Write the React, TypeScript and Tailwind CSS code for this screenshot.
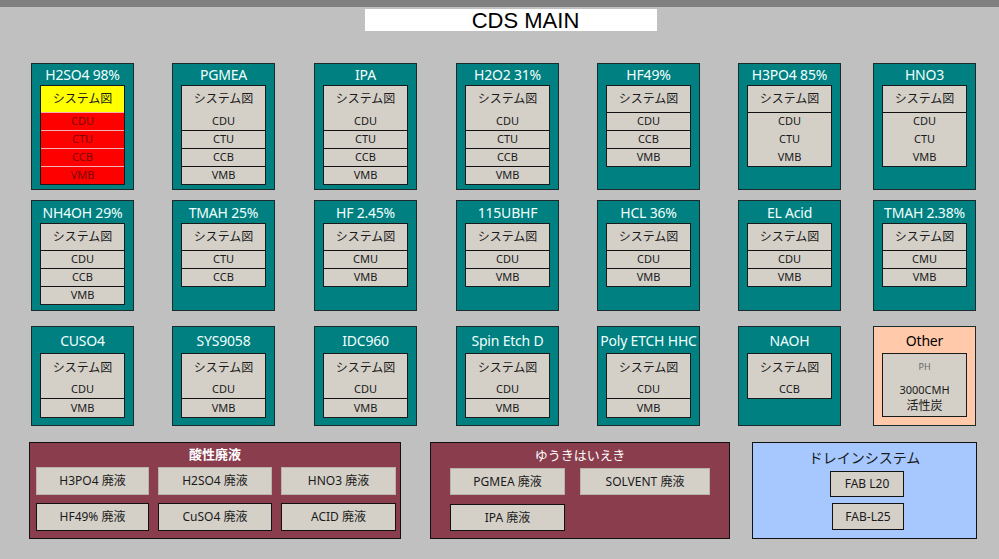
import React from 'react';

type Seg = { t: string[]; h: string; line?: boolean; tone?: 'y' | 'r' };
type CardDef = { title: string; segs: Seg[]; other?: boolean };

const sys = (h = 'h-[26px]', tone?: 'y'): Seg => ({ t: ['システム図'], h, tone });
const row = (label: string, line = true, tone?: 'r'): Seg => ({ t: [label], h: 'h-[18px]', line, tone });

const full = (labels: string[]): Seg[] => [sys(), ...labels.map((l) => row(l))];
// system box where the first item shares its cell (no divider)
const open = (labels: string[]): Seg[] => [sys(), ...labels.map((l, i) => row(l, i > 0))];
const merged = (first: string, rest: string[]): Seg[] => [
  { t: ['システム図', first], h: 'h-[44px]' },
  ...rest.map((l) => ({ t: [l], h: 'h-[19px]', line: true })),
];

const ROW1: CardDef[] = [
  {
    title: 'H2SO4 98%',
    segs: [sys('h-[26px]', 'y'), row('CDU', true, 'r'), row('CTU', true, 'r'), row('CCB', true, 'r'), row('VMB', true, 'r')],
  },
  { title: 'PGMEA', segs: open(['CDU', 'CTU', 'CCB', 'VMB']) },
  { title: 'IPA', segs: open(['CDU', 'CTU', 'CCB', 'VMB']) },
  { title: 'H2O2 31%', segs: open(['CDU', 'CTU', 'CCB', 'VMB']) },
  { title: 'HF49%', segs: full(['CDU', 'CCB', 'VMB']) },
  { title: 'H3PO4 85%', segs: [sys(), row('CDU'), row('CTU', false), row('VMB', false)] },
  { title: 'HNO3', segs: [sys(), row('CDU'), row('CTU', false), row('VMB', false)] },
];

const ROW2: CardDef[] = [
  { title: 'NH4OH 29%', segs: full(['CDU', 'CCB', 'VMB']) },
  { title: 'TMAH 25%', segs: full(['CTU', 'CCB']) },
  { title: 'HF 2.45%', segs: full(['CMU', 'VMB']) },
  { title: '115UBHF', segs: full(['CDU', 'VMB']) },
  { title: 'HCL 36%', segs: full(['CDU', 'VMB']) },
  { title: 'EL Acid', segs: full(['CDU', 'VMB']) },
  { title: 'TMAH 2.38%', segs: full(['CMU', 'VMB']) },
];

const ROW3: CardDef[] = [
  { title: 'CUSO4', segs: merged('CDU', ['VMB']) },
  { title: 'SYS9058', segs: merged('CDU', ['VMB']) },
  { title: 'IDC960', segs: merged('CDU', ['VMB']) },
  { title: 'Spin Etch D', segs: merged('CDU', ['VMB']) },
  { title: 'Poly ETCH HHC', segs: merged('CDU', ['VMB']) },
  { title: 'NAOH', segs: merged('CCB', []) },
  { title: 'Other', other: true, segs: [{ t: ['PH', '3000CMH', '活性炭'], h: 'h-[62px]' }] },
];

function SegCell({ s }: { s: Seg }) {
  const bg = s.tone === 'y' ? 'bg-[#ffff00]' : s.tone === 'r' ? 'bg-[#ff0000]' : '';
  const color = s.tone === 'r' ? 'text-[#7a0a0a]' : 'text-[#1a1a1a]';
  const line = s.line ? (s.tone === 'r' ? 'border-t border-[#f3b0b0]' : 'border-t border-[#111]') : '';

  if (s.t.length === 3) {
    return (
      <div className={`${s.h} flex flex-col items-center text-[11px] leading-[16px] ${color}`}>
        <span className="mt-[5px] text-[9px] text-[#666]">PH</span>
        <span className="mt-[7px]">3000CMH</span>
        <span className="text-[12px]">活性炭</span>
      </div>
    );
  }
  if (s.t.length === 2) {
    return (
      <div className={`${s.h} flex flex-col items-center ${color}`}>
        <span className="h-[28px] flex items-center text-[12px]">{s.t[0]}</span>
        <span className="h-[14px] flex items-center text-[11px]">{s.t[1]}</span>
      </div>
    );
  }
  const isSys = s.t[0] === 'システム図';
  return (
    <div className={`${s.h} ${bg} ${line} flex items-center justify-center ${isSys ? 'text-[12px]' : 'text-[11px]'} ${color}`}>
      {s.t[0]}
    </div>
  );
}

function Card({ c, head }: { c: CardDef; head: string }) {
  return (
    <div className={`w-[103px] h-full border border-[#1b2a2a] ${c.other ? 'bg-[#ffc9aa]' : 'bg-[#008080]'}`}>
      <div
        className={`${head} flex items-center justify-center whitespace-nowrap text-[14px] tracking-[-0.2px] ${
          c.other ? 'text-black' : 'text-[#f2ffff]'
        }`}
      >
        {c.title}
      </div>
      <div className="mx-auto w-[85px] border border-[#1a1a1a] bg-[#d4d0c8]">
        {c.segs.map((s, i) => (
          <SegCell key={i} s={s} />
        ))}
      </div>
    </div>
  );
}

function CardRow({ cards, head, cls }: { cards: CardDef[]; head: string; cls: string }) {
  return (
    <div className={`ml-[31px] grid grid-cols-[141px_142px_142px_141px_141px_135px_103px] ${cls}`}>
      {cards.map((c) => (
        <Card key={c.title} c={c} head={head} />
      ))}
    </div>
  );
}

function Btn({ label, cls, strong = true }: { label: string; cls: string; strong?: boolean }) {
  return (
    <div
      className={`${cls} flex items-center justify-center bg-[#d4d0c8] text-[12px] text-[#1a1a1a] whitespace-nowrap border ${
        strong ? 'border-[#111]' : 'border-[#b8b4ac]'
      }`}
    >
      {label}
    </div>
  );
}

export default function App() {
  return (
    <div
      className="w-[999px] h-[559px] overflow-hidden bg-[#c0c0c0]"
      style={{ fontFamily: '"Noto Sans", "Noto Sans CJK JP", sans-serif' }}
    >
      <div className="h-[7px] bg-[#808080]" />
      <div
        className="ml-[365px] mt-[2px] w-[292px] h-[22px] pl-[29px] bg-white flex items-center justify-center text-[22px] text-black whitespace-pre"
        style={{ fontFamily: '"Liberation Sans", sans-serif' }}
      >
        CDS MAIN
      </div>

      <CardRow cards={ROW1} head="h-[21px]" cls="mt-[32px] h-[127px]" />
      <CardRow cards={ROW2} head="h-[22px]" cls="mt-[10px] h-[111px]" />
      <CardRow cards={ROW3} head="h-[26px]" cls="mt-[15px] h-[100px]" />

      <div className="mt-[16px] flex">
        {/* 酸性廃液 */}
        <div className="ml-[29px] w-[372px] h-[97px] border border-[#111] bg-[#8a3d4d]">
          <div className="h-[24px] flex items-center justify-center text-[13px] font-bold text-white">酸性廃液</div>
          <div className="ml-[6px] grid grid-cols-[113px_114px_115px] gap-x-[9px] gap-y-[8px]">
            <Btn label="H3PO4 廃液" cls="h-[28px]" strong={false} />
            <Btn label="H2SO4 廃液" cls="h-[28px]" strong={false} />
            <Btn label="HNO3 廃液" cls="h-[28px]" strong={false} />
            <Btn label="HF49% 廃液" cls="h-[28px]" />
            <Btn label="CuSO4 廃液" cls="h-[28px]" />
            <Btn label="ACID 廃液" cls="h-[28px]" />
          </div>
        </div>

        {/* ゆうきはいえき */}
        <div className="ml-[29px] w-[300px] h-[97px] border border-[#111] bg-[#8a3d4d]">
          <div className="h-[25px] flex items-center justify-center text-[13px] text-white">ゆうきはいえき</div>
          <div className="ml-[19px] flex gap-[15px]">
            <Btn label="PGMEA 廃液" cls="w-[115px] h-[27px]" strong={false} />
            <Btn label="SOLVENT 廃液" cls="w-[130px] h-[27px]" strong={false} />
          </div>
          <div className="ml-[19px] mt-[9px]">
            <Btn label="IPA 廃液" cls="w-[115px] h-[27px]" />
          </div>
        </div>

        {/* ドレインシステム */}
        <div className="ml-[22px] w-[225px] h-[97px] border border-[#111] bg-[#a6c8ff]">
          <div className="h-[28px] flex items-center justify-center text-[14px] text-[#1a1a1a]">ドレインシステム</div>
          <Btn label="FAB L20" cls="ml-[77px] w-[74px] h-[26px]" />
          <Btn label="FAB-L25" cls="ml-[79px] mt-[6px] w-[72px] h-[27px]" />
        </div>
      </div>
    </div>
  );
}
